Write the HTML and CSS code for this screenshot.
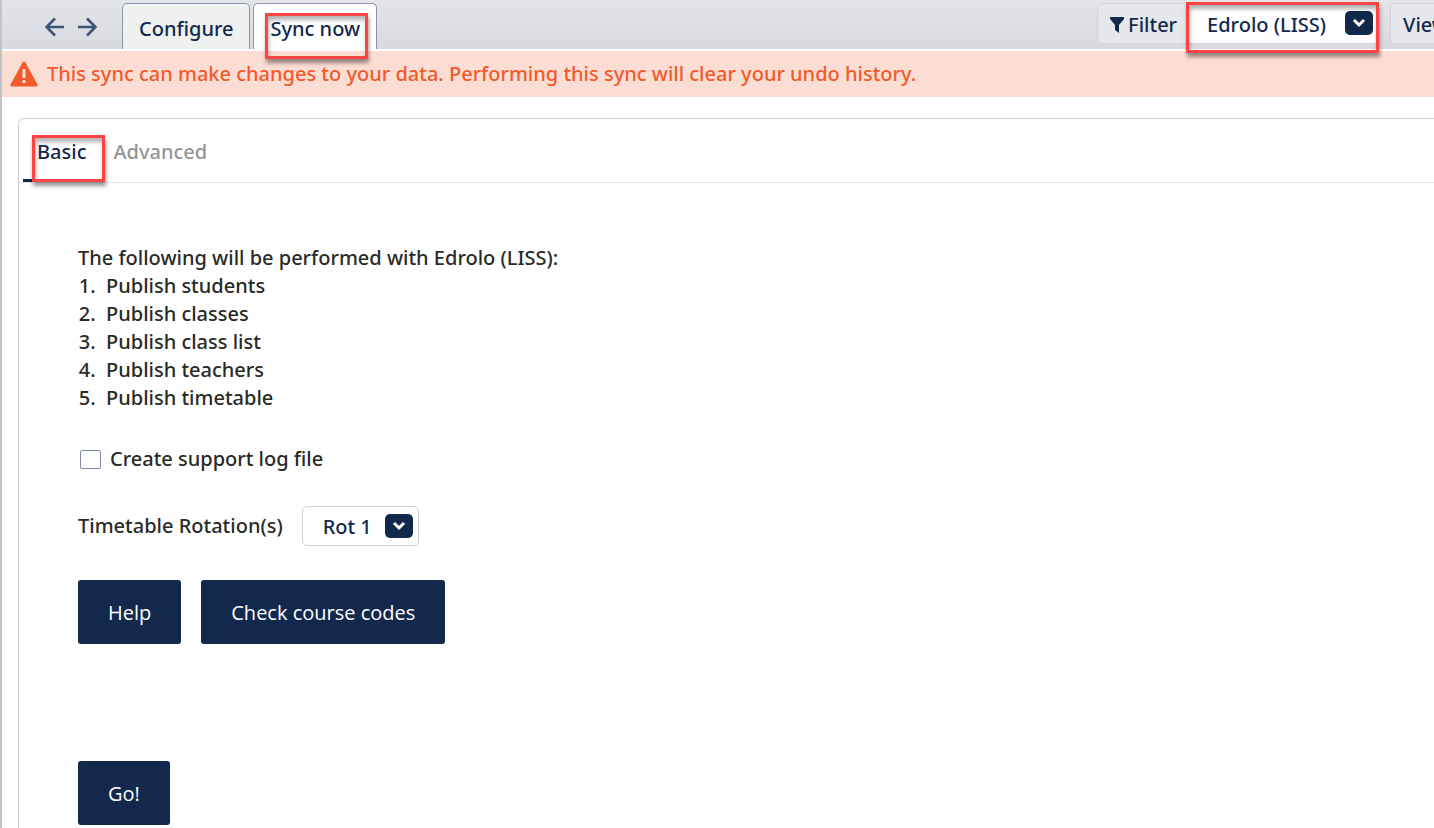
FILE: index.html
```html
<!DOCTYPE html>
<html lang="en">
<head>
<meta charset="utf-8">
<title>Sync now</title>
<link rel="stylesheet" href="styles.css">
</head>
<body>
<div class="app">
  <header class="toolbar">
    <div class="history">
      <button class="nav-button" aria-label="Back"><svg width="20" height="20" viewBox="0 0 20 20"><path d="M19 10H2M10 1.500 1.500 10l8.500 8.500"/></svg></button>
      <button class="nav-button" aria-label="Forward"><svg width="20" height="20" viewBox="0 0 20 20"><path d="M1 10h17M10 1.500l8.500 8.500-8.500 8.500"/></svg></button>
    </div>
    <nav class="page-tabs">
      <button class="page-tab">Configure</button>
      <button class="page-tab page-tab-active">Sync now<span class="mark mark-sync"></span></button>
    </nav>
    <div class="actions">
      <div class="filter">
        <label class="filter-label" for="filter"><svg width="14" height="16" viewBox="0 0 14 16"><path d="M0 0h14v2L9 8v8l-4-3V8L0 2z"/></svg>Filter</label>
        <div class="picker picker-filter">
          <select id="filter" class="picker-select"><option>Edrolo (LISS)</option></select>
          <span class="picker-arrow"><svg width="14" height="10" viewBox="0 0 14 10"><path d="M2 2l5 5 5-5"/></svg></span>
        </div>
        <span class="mark mark-filter"></span>
      </div>
      <button class="view-button">View</button>
    </div>
  </header>
  <div class="warning" role="alert">
    <svg width="28" height="26" viewBox="0 0 28 26"><path class="warning-shape" d="M14 0.500c.6 0 1 .3 1.300.8l12.200 22.200c.6 1.100 0 2-1.200 2H1.700c-1.200 0-1.800-.9-1.200-2L12.700 1.300c.3-.5.7-.8 1.300-.8z"/><path class="warning-mark" d="M12.500 8h3v9h-3zM12.500 19h3v3h-3z"/></svg>
    <span>This sync can make changes to your data. Performing this sync will clear your undo history.</span>
  </div>
  <main class="panel">
    <nav class="sub-tabs">
      <button class="sub-tab sub-tab-active">Basic<span class="mark mark-basic"></span></button>
      <button class="sub-tab">Advanced</button>
    </nav>
    <div class="content">
      <p class="intro">The following will be performed with Edrolo (LISS):</p>
      <ol class="steps">
        <li>Publish students</li>
        <li>Publish classes</li>
        <li>Publish class list</li>
        <li>Publish teachers</li>
        <li>Publish timetable</li>
      </ol>
      <label class="check"><input class="check-box" type="checkbox">Create support log file</label>
      <div class="rotation">
        <label for="rotation">Timetable Rotation(s)</label>
        <div class="picker picker-rotation">
          <select id="rotation" class="picker-select"><option>Rot 1</option></select>
          <span class="picker-arrow"><svg width="14" height="10" viewBox="0 0 14 10"><path d="M2 2l5 5 5-5"/></svg></span>
        </div>
      </div>
      <div class="buttons">
        <button class="button">Help</button>
        <button class="button">Check course codes</button>
      </div>
      <button class="button button-go">Go!</button>
    </div>
  </main>
</div>
</body>
</html>
```
FILE: styles.css
```css
* { box-sizing: border-box; }
body {
  margin: 0;
  background: #fff;
  color: #2a2a26;
  font: 500 20px/28px "Noto Sans", "Open Sans", sans-serif;
  overflow: hidden;
}
button, select, input { font: inherit; color: inherit; margin: 0; }
button { border: 0; background: none; padding: 0; white-space: nowrap; cursor: pointer; }
.app { min-height: 100vh; border-left: 2px solid #c4c4c6; display: flex; flex-direction: column; }

.toolbar {
  display: flex;
  height: 49px;
  background: linear-gradient(#e4e5e9, #d9dae0);
  color: #12294d;
}
.history { display: flex; align-items: center; gap: 12px; padding: 4px 25px 0 43px; }
.nav-button { display: flex; }
.nav-button svg { fill: none; stroke: #3e5475; stroke-width: 2.600; }
.page-tabs { display: flex; align-items: flex-end; gap: 3px; }
.page-tab {
  position: relative;
  height: 46px;
  padding: 4px 16px 0;
  border: 1px solid #8a93b0;
  border-bottom: 0;
  border-radius: 5px 5px 0 0;
  background: #eff1f1;
}
.page-tab-active { background: #fff; }
.mark {
  position: absolute;
  z-index: 2;
  border: 3px solid #fd4343;
  box-shadow: 1px 4px 4px rgba(0, 0, 0, .4), inset 1px 4px 4px rgba(0, 0, 0, .3);
  pointer-events: none;
}
.mark-sync { inset: 9px 8px -10px 11px; }

.actions { display: flex; align-items: flex-start; gap: 11px; margin: 3px -27px 0 auto; }
.filter { position: relative; display: flex; height: 41px; border: 1px solid #d0d3da; border-radius: 5px; background: #e6e7eb; }
.filter-label { display: flex; align-items: center; gap: 4px; padding: 2px 10px 0 12px; }
.filter-label svg { fill: #12294d; }
.mark-filter { inset: -2px -1px -10px 88px; }
.view-button { height: 41px; padding: 2px 12px 0; border: 1px solid #d0d3da; border-radius: 5px; background: #e6e7eb; }

.picker { position: relative; display: flex; color: #12294d; background: #fff; border-radius: 5px; }
.picker-select { appearance: none; width: 100%; padding: 2px 0 0 20px; border: 0; background: none; outline: 0; }
.picker-arrow {
  position: absolute;
  right: 5px;
  top: 7px;
  display: flex;
  align-items: center;
  justify-content: center;
  width: 28px;
  height: 24px;
  border-radius: 5px;
  background: #12294d;
  pointer-events: none;
}
.picker-arrow svg { fill: none; stroke: #fff; stroke-width: 3; }
.picker-filter { width: 191px; }

.warning {
  display: flex;
  align-items: center;
  gap: 9px;
  height: 46px;
  margin-top: 2px;
  padding-left: 8px;
  background: #fcddd4;
  color: #f15a2b;
  white-space: nowrap;
}
.warning-shape { fill: #f15a2b; }
.warning-mark { fill: #fcddd4; }

.panel {
  flex: 1;
  margin: 21px 0 0 16px;
  border: 1px solid #c8ced6;
  border-right: 0;
  border-bottom: 0;
  border-radius: 6px 0 0 0;
}
.sub-tabs { display: flex; height: 64px; padding-left: 4px; border-bottom: 1px solid #e3e5e8; }
.sub-tab { position: relative; padding: 2px 14px 0; color: #959595; }
.sub-tab-active { color: #12294d; border-bottom: 3px solid #12294d; padding: 5px 13px 0 14px; }
.mark-basic { inset: 16px -6px -3px 9px; }

.content { padding: 61px 59px 3px; }
.intro { margin: 0; }
.steps { margin: 0; padding: 0 0 0 28px; }
.steps li::marker { content: counter(list-item) ".\a0\a0"; }
.check { display: flex; width: fit-content; align-items: center; gap: 9px; margin: 33px 0 0 2px; }
.check-box { appearance: none; width: 21px; height: 19px; border: 1px solid #8088ab; border-radius: 2px; background: #fff; }
.rotation { display: flex; align-items: center; gap: 19px; margin-top: 33px; }
.picker-rotation { width: 117px; height: 40px; border: 1px solid #ccd2dc; }
.buttons { display: flex; gap: 20px; margin-top: 34px; }
.button {
  height: 64px;
  padding: 2px 30px 0;
  border-radius: 3px;
  background: #12294d;
  color: #fff;
  font-family: "Open Sans", "Noto Sans", sans-serif;
  font-weight: 400;
}
.button-go { margin-top: 117px; }
```
